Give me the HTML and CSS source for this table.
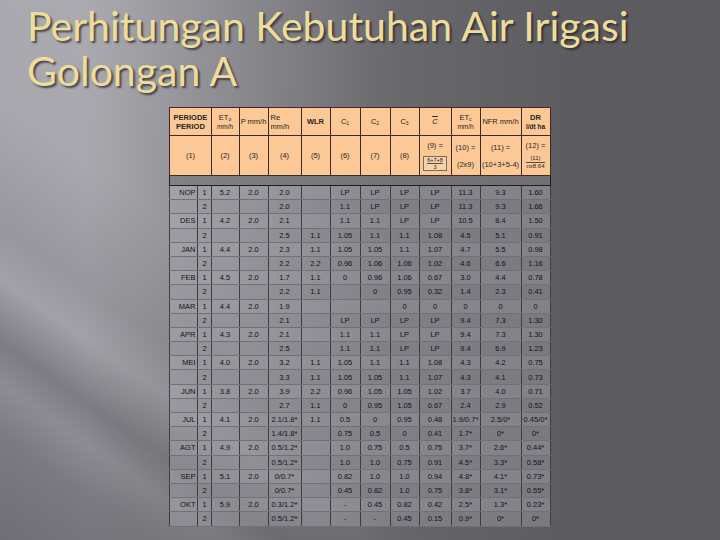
FILE: index.html
```html
<!DOCTYPE html>
<html>
<head>
<meta charset="utf-8">
<link rel="stylesheet" href="styles.css">
</head>
<body>
<div class="slide">
  <h1 class="title">Perhitungan Kebutuhan Air Irigasi<br>Golongan A</h1>
  <table class="tbl">
    <colgroup>
      <col style="width:28px"><col style="width:13px"><col style="width:28px"><col style="width:29px"><col style="width:33px"><col style="width:29px"><col style="width:30px"><col style="width:30px"><col style="width:29px"><col style="width:32px"><col style="width:29px"><col style="width:41px"><col style="width:29px">
    </colgroup>
    <thead>
      <tr class="h1">
        <th colspan="2" class="bold">PERIODE<br>PERIOD</th>
        <th>ET<sub>o</sub><br><span class="sm">mm/h</span></th>
        <th class="tight">P mm/h</th>
        <th class="left">Re<br>mm/h</th>
        <th class="bold">WLR</th>
        <th>C<sub>1</sub></th>
        <th>C<sub>2</sub></th>
        <th>C<sub>3</sub></th>
        <th><span class="over">C</span></th>
        <th>ET<sub>c</sub><br><span class="sm">mm/h</span></th>
        <th>NFR mm/h</th>
        <th class="bold">DR<br><span class="sm">l/dt ha</span></th>
      </tr>
      <tr class="h2">
        <th colspan="2">(1)</th>
        <th>(2)</th>
        <th>(3)</th>
        <th>(4)</th>
        <th>(5)</th>
        <th>(6)</th>
        <th>(7)</th>
        <th>(8)</th>
        <th class="stack"><div>(9) =</div><div class="fbox"><span class="num">6+7+8</span><span class="den">3</span></div></th>
        <th class="stack"><div>(10) =</div><div>(2x9)</div></th>
        <th class="stack"><div>(11) =</div><div>(10+3+5-4)</div></th>
        <th class="stack"><div>(12) =</div><div class="frac"><span class="num">(11)</span><span class="den">nx8.64</span></div></th>
      </tr>
      <tr class="sep"><td colspan="13"></td></tr>
    </thead>
    <tbody id="rows"></tbody>
  </table>
</div>
<script src="script.js"></script>
</body>
</html>
```
FILE: script.js
```js
var data = [
["NOP","1","5.2","2.0","2.0","","LP","LP","LP","LP","11.3","9.3","1.60"],
["","2","","","2.0","","1.1","LP","LP","LP","11.3","9.3","1.66"],
["DES","1","4.2","2.0","2.1","","1.1","1.1","LP","LP","10.5","8.4","1.50"],
["","2","","","2.5","1.1","1.05","1.1","1.1","1.08","4.5","5.1","0.91"],
["JAN","1","4.4","2.0","2.3","1.1","1.05","1.05","1.1","1.07","4.7","5.5","0.98"],
["","2","","","2.2","2.2","0.96","1.06","1.06","1.02","4.6","6.6","1.16"],
["FEB","1","4.5","2.0","1.7","1.1","0","0.96","1.06","0.67","3.0","4.4","0.78"],
["","2","","","2.2","1.1","","0","0.95","0.32","1.4","2.3","0.41"],
["MAR","1","4.4","2.0","1.9","","","","0","0","0","0","0"],
["","2","","","2.1","","LP","LP","LP","LP","9.4","7.3","1.30"],
["APR","1","4.3","2.0","2.1","","1.1","1.1","LP","LP","9.4","7.3","1.30"],
["","2","","","2.5","","1.1","1.1","LP","LP","9.4","6.9","1.23"],
["MEI","1","4.0","2.0","3.2","1.1","1.05","1.1","1.1","1.08","4.3","4.2","0.75"],
["","2","","","3.3","1.1","1.05","1.05","1.1","1.07","4.3","4.1","0.73"],
["JUN","1","3.8","2.0","3.9","2.2","0.96","1.05","1.05","1.02","3.7","4.0","0.71"],
["","2","","","2.7","1.1","0","0.95","1.05","0.67","2.4","2.9","0.52"],
["JUL","1","4.1","2.0","2.1/1.8*","1.1","0.5","0","0.95","0.48","1.9/0.7*","2.5/0*","0.45/0*"],
["","2","","","1.4/1.8*","","0.75","0.5","0","0.41","1.7*","0*","0*"],
["AGT","1","4.9","2.0","0.5/1.2*","","1.0","0.75","0.5","0.75","3.7*","2.6*","0.44*"],
["","2","","","0.5/1.2*","","1.0","1.0","0.75","0.91","4.5*","3.3*","0.58*"],
["SEP","1","5.1","2.0","0/0.7*","","0.82","1.0","1.0","0.94","4.8*","4.1*","0.73*"],
["","2","","","0/0.7*","","0.45","0.82","1.0","0.75","3.8*","3.1*","0.55*"],
["OKT","1","5.9","2.0","0.3/1.2*","","-","0.45","0.82","0.42","2.5*","1.3*","0.23*"],
["","2","","","0.5/1.2*","","-","-","0.45","0.15","0.9*","0*","0*"]
];
var tb = document.getElementById("rows");
data.forEach(function (r, i) {
  var tr = document.createElement("tr");
  tr.className = i % 2 ? "even" : "odd";
  r.forEach(function (v, j) {
    var td = document.createElement("td");
    td.textContent = v;
    if (j === 0) td.className = "mon";
    if (j === 1) td.className = "no";
    tr.appendChild(td);
  });
  tb.appendChild(tr);
});
```
FILE: styles.css
```css
html, body {
  margin: 0;
  padding: 0;
}
.slide {
  width: 720px;
  height: 540px;
  overflow: hidden;
  box-sizing: border-box;
  padding-top: 3px;
  background:
    linear-gradient(to right, rgba(93,92,97,0) 0%, rgba(93,92,97,0) 12%, rgba(93,92,97,0.85) 55%, rgba(92,91,96,1) 80%),
    linear-gradient(35deg, #6f6e74 0%, #7b7a80 10%, #8d8c92 15%, #7d7c82 19%, #a2a1a7 25%, #98979d 30%, #a9a8ae 42%, #b0afb5 100%);
}
.title {
  margin: 0 0 0 27px;
  font-family: Lato, "Open Sans", sans-serif;
  font-weight: 400;
  font-size: 41px;
  line-height: 45px;
  color: #ecdd9c;
  text-shadow: 2px 2px 2px rgba(40,38,40,0.75);
}
.tbl {
  margin: 14px auto 0;
  width: 380px;
  table-layout: fixed;
  border-collapse: collapse;
  font-family: "Liberation Sans", Arial, sans-serif;
  font-size: 7.5px;
  color: #141416;
  border: 1.5px solid #1e1d20;
}
.tbl th {
  background: #fcc896;
  border: 1px solid #3a2c22;
  font-weight: 400;
  padding: 0;
  text-align: center;
  line-height: 9px;
  color: #2a2420;
  overflow: hidden;
  white-space: nowrap;
}
.tbl th.bold { font-weight: 700; }
.tbl th.left { text-align: left; padding-left: 2px; }
.tbl th .sm { font-size: 6.5px; }
.tbl th sub { font-size: 5px; vertical-align: -1px; line-height: 0; }
.tbl .over { text-decoration: overline; font-style: italic; }
.h1 { height: 28px; }
.h2 { height: 40px; }
.h2 th.stack div { line-height: 9px; }
.h2 th.stack div + div { margin-top: 8px; }
.fbox {
  display: inline-flex;
  flex-direction: column;
  border: 1px solid #7a6a58;
  background: #f3d2ad;
  padding: 0 3px;
  font-size: 5.5px;
  line-height: 6px !important;
  margin-top: 6px !important;
}
.frac {
  display: inline-flex;
  flex-direction: column;
  font-size: 6px;
  line-height: 7px !important;
  margin-top: 5px !important;
}
.frac .num, .fbox .num { border-bottom: 1px solid #5a4a3a; }
.sep td {
  height: 9px;
  background: rgba(120,119,126,0.7);
  border: 1px solid #1e1d20;
  padding: 0;
}
.tbl tbody td {
  height: 13.2px;
  padding: 0;
  text-align: center;
  border-left: 1px solid #3d3c40;
  border-right: 1px solid #3d3c40;
  border-bottom: 1px solid #727177;
  white-space: nowrap;
  overflow: hidden;
  background: rgba(176,175,183,0.45);
}
.tbl tbody tr.even td { background: rgba(168,167,175,0.38); }
.tbl tbody td.mon { text-align: right; padding-right: 2px; border-right: 1px solid #3d3c40; }
.tbl tbody td.no { border-left: 1px solid #3d3c40; }
```
